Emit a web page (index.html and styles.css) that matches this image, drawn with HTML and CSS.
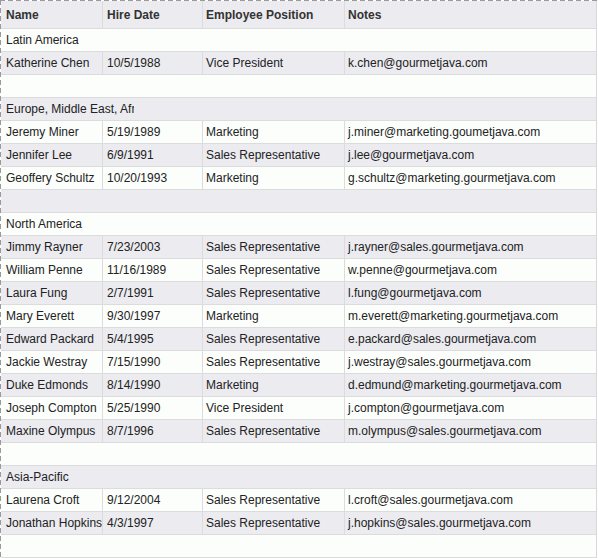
FILE: index.html
```html
<!DOCTYPE html>
<html>
<head>
<meta charset="utf-8">
<link rel="stylesheet" href="styles.css">
</head>
<body>
<div class="frame">
  <div class="table">
    <div class="row head">
      <div class="cell">Name</div><div class="cell">Hire Date</div><div class="cell">Employee Position</div><div class="cell last">Notes</div>
    </div>
    <div class="body">
      <div class="row group"><div class="cell">Latin America</div></div>
      <div class="row"><div class="cell">Katherine Chen</div><div class="cell">10/5/1988</div><div class="cell">Vice President</div><div class="cell last">k.chen@gourmetjava.com</div></div>
      <div class="row empty"></div>
      <div class="row group"><div class="cell">Europe, Middle East, Africa</div></div>
      <div class="row"><div class="cell">Jeremy Miner</div><div class="cell">5/19/1989</div><div class="cell">Marketing</div><div class="cell last">j.miner@marketing.goumetjava.com</div></div>
      <div class="row"><div class="cell">Jennifer Lee</div><div class="cell">6/9/1991</div><div class="cell">Sales Representative</div><div class="cell last">j.lee@gourmetjava.com</div></div>
      <div class="row"><div class="cell">Geoffery Schultz</div><div class="cell">10/20/1993</div><div class="cell">Marketing</div><div class="cell last">g.schultz@marketing.gourmetjava.com</div></div>
      <div class="row empty"></div>
      <div class="row group"><div class="cell">North America</div></div>
      <div class="row"><div class="cell">Jimmy Rayner</div><div class="cell">7/23/2003</div><div class="cell">Sales Representative</div><div class="cell last">j.rayner@sales.gourmetjava.com</div></div>
      <div class="row"><div class="cell">William Penne</div><div class="cell">11/16/1989</div><div class="cell">Sales Representative</div><div class="cell last">w.penne@gourmetjava.com</div></div>
      <div class="row"><div class="cell">Laura Fung</div><div class="cell">2/7/1991</div><div class="cell">Sales Representative</div><div class="cell last">l.fung@gourmetjava.com</div></div>
      <div class="row"><div class="cell">Mary Everett</div><div class="cell">9/30/1997</div><div class="cell">Marketing</div><div class="cell last">m.everett@marketing.gourmetjava.com</div></div>
      <div class="row"><div class="cell">Edward Packard</div><div class="cell">5/4/1995</div><div class="cell">Sales Representative</div><div class="cell last">e.packard@sales.gourmetjava.com</div></div>
      <div class="row"><div class="cell">Jackie Westray</div><div class="cell">7/15/1990</div><div class="cell">Sales Representative</div><div class="cell last">j.westray@sales.gourmetjava.com</div></div>
      <div class="row"><div class="cell">Duke Edmonds</div><div class="cell">8/14/1990</div><div class="cell">Marketing</div><div class="cell last">d.edmund@marketing.gourmetjava.com</div></div>
      <div class="row"><div class="cell">Joseph Compton</div><div class="cell">5/25/1990</div><div class="cell">Vice President</div><div class="cell last">j.compton@gourmetjava.com</div></div>
      <div class="row"><div class="cell">Maxine Olympus</div><div class="cell">8/7/1996</div><div class="cell">Sales Representative</div><div class="cell last">m.olympus@sales.gourmetjava.com</div></div>
      <div class="row empty"></div>
      <div class="row group"><div class="cell">Asia-Pacific</div></div>
      <div class="row"><div class="cell">Laurena Croft</div><div class="cell">9/12/2004</div><div class="cell">Sales Representative</div><div class="cell last">l.croft@sales.gourmetjava.com</div></div>
      <div class="row"><div class="cell">Jonathan Hopkins</div><div class="cell">4/3/1997</div><div class="cell">Sales Representative</div><div class="cell last">j.hopkins@sales.gourmetjava.com</div></div>
      <div class="row empty"></div>
    </div>
  </div>
</div>
</body>
</html>
```
FILE: styles.css
```css
html, body {
  margin: 0;
  padding: 0;
  background: #ffffff;
}
body {
  font-family: "Liberation Sans", Arial, sans-serif;
  font-size: 12px;
  color: #222222;
}
.frame {
  width: 597px;
  height: 557px;
  padding: 1px 0 0 1px;
  overflow: hidden;
  background:
    repeating-linear-gradient(to right, #9a9a9a 0 5px, transparent 5px 8px) top left / 100% 1px no-repeat,
    repeating-linear-gradient(to bottom, #9a9a9a 0 5px, transparent 5px 8px) top left / 1px 100% no-repeat,
    #ffffff;
}
.table {
  width: 596px;
  box-sizing: border-box;
  border-right: 1px solid #d8d8d8;
}
.row {
  display: grid;
  grid-template-columns: 102px 100px 142px 251px;
  height: 23px;
  box-sizing: border-box;
  border-bottom: 1px solid #dcdcdc;
  background: #fcfefc;
}
.body .row:nth-child(even) {
  background: #ebebf0;
}
.cell {
  box-sizing: border-box;
  padding: 0 0 0 3px;
  line-height: 22px;
  white-space: nowrap;
  overflow: hidden;
  border-right: 1px solid #dcdcdc;
}
.cell:first-child {
  padding-left: 5px;
}
.cell:nth-child(2) {
  padding-left: 4px;
}
.cell.last {
  border-right: none;
}
.head {
  height: 28px;
  background: #ebebf0;
  font-weight: bold;
  color: #333333;
}
.head .cell {
  line-height: 29px;
}
.group {
  grid-template-columns: 133px 1fr;
}
.group .cell {
  border-right: none;
}
```
